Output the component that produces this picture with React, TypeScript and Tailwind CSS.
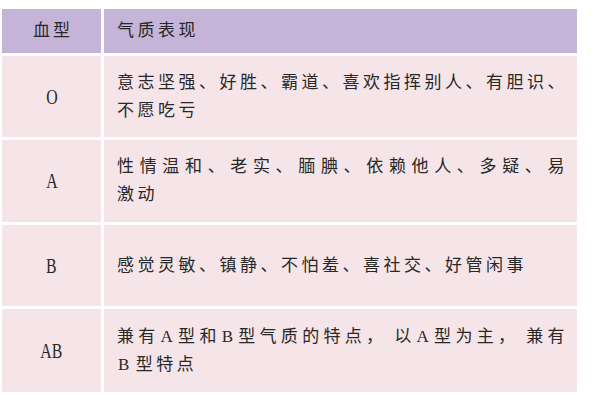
import { Fragment, type ReactNode } from "react";

// Latin letter inside Chinese text, tight like the original typesetting
const L = ({ children }: { children: ReactNode }) => (
  <span className="mx-[1px]">{children}</span>
);

// comma with a little breathing room after it
const C = () => <span className="mr-[7px]">，</span>;

const rows: { type: string; lines: ReactNode[] }[] = [
  {
    type: "O",
    lines: ["意志坚强、好胜、霸道、喜欢指挥别人、有胆识、", "不愿吃亏"],
  },
  {
    type: "A",
    lines: ["性情温和、老实、腼腆、依赖他人、多疑、易", "激动"],
  },
  {
    type: "B",
    lines: ["感觉灵敏、镇静、不怕羞、喜社交、好管闲事"],
  },
  {
    type: "AB",
    lines: [
      <>
        兼有<L>A</L>型和<L>B</L>型气质的特点<C />以<L>A</L>型为主<C />兼有
      </>,
      <>
        <L>B</L>
        <span className="ml-[2px]">型特点</span>
      </>,
    ],
  },
];

export default function App() {
  return (
    <div
      className="w-[600px] h-[400px] bg-white pt-[9px] pl-[2px] text-[#282828]"
      style={{ fontFamily: "'Liberation Serif', 'Noto Sans CJK SC', serif" }}
    >
      <div className="grid grid-cols-[99px_473px] grid-rows-[44px_81px_82px_81px_83px] gap-[3px] bg-white">
        {/* Header */}
        <div className="bg-[#c6b4d8] flex items-center justify-center text-[17px] tracking-[3px] pl-[3px]">
          血型
        </div>
        <div className="bg-[#c6b4d8] flex items-center pl-[13px] text-[17px] tracking-[3.5px]">
          气质表现
        </div>

        {/* Body rows */}
        {rows.map((row) => (
          <Fragment key={row.type}>
            <div className="bg-[#f5e5e8] flex items-center justify-center">
              <span className="inline-block text-[22px] leading-none scale-x-[0.72]">
                {row.type}
              </span>
            </div>
            <div className="bg-[#f5e5e8] flex flex-col justify-center pl-[13px] pr-[9px] text-[17px] tracking-[3.5px] leading-[28px]">
              {row.lines.map((line, i) => (
                <div
                  key={i}
                  className={
                    i === 0 && row.lines.length > 1
                      ? "text-justify [text-align-last:justify] whitespace-nowrap"
                      : "whitespace-nowrap"
                  }
                >
                  {line}
                </div>
              ))}
            </div>
          </Fragment>
        ))}
      </div>
    </div>
  );
}
